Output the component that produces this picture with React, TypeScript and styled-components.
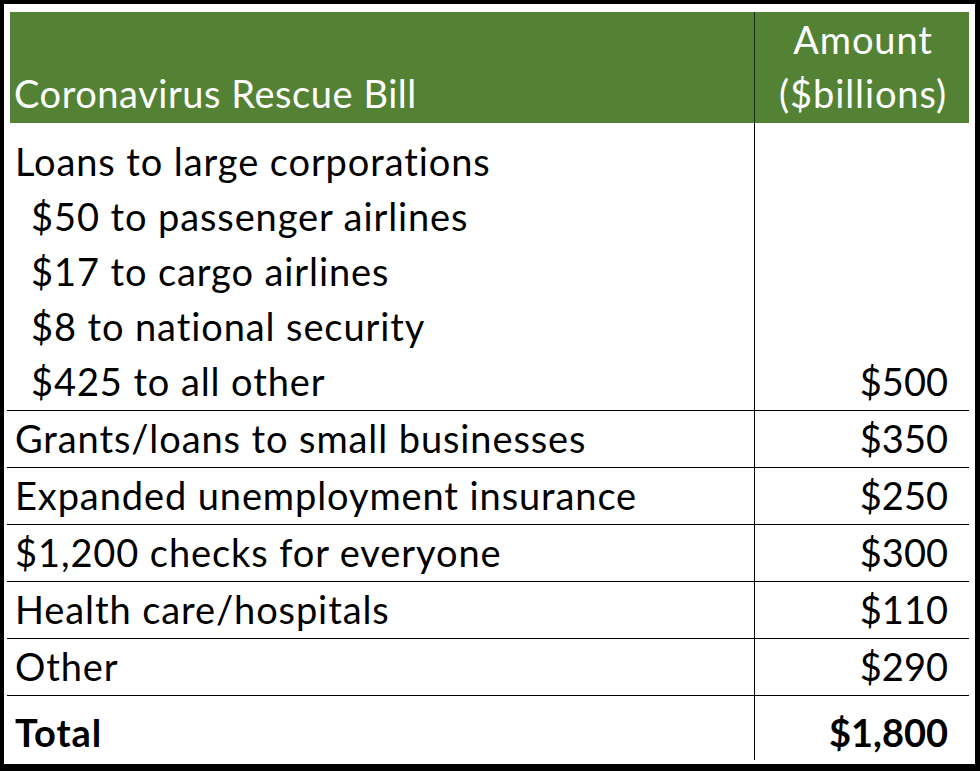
import React from "react";
import styled, { createGlobalStyle } from "styled-components";

const Global = createGlobalStyle`
  html, body { margin: 0; padding: 0; background: #ffffff; }
  body { font-family: Lato, "Open Sans", sans-serif; }
`;

const Frame = styled.div`
  box-sizing: border-box;
  width: 980px;
  height: 771px;
  border-style: solid;
  border-color: #000;
  border-width: 4px 5px 7px 4px;
  padding: 8px 6px 4px 3px;
  background: #fff;
`;

const Table = styled.div`
  display: flex;
  flex-direction: column;
  font-family: Lato, "Open Sans", sans-serif;
  font-size: 38px;
  letter-spacing: 0.9px;
  color: #000;
`;

const HeaderRow = styled.div`
  display: grid;
  grid-template-columns: 745px 1fr;
  height: 111px;
  margin-left: 3px;
  background: #548235;
  color: #fff;
`;

const HeaderCell = styled.div<{ $align?: "left" | "center"; $divider?: boolean }>`
  display: flex;
  flex-direction: column;
  justify-content: flex-end;
  align-items: ${(p) => (p.$align === "center" ? "center" : "flex-start")};
  text-align: ${(p) => p.$align ?? "left"};
  line-height: 54px;
  letter-spacing: ${(p) => (p.$align === "center" ? "0.9px" : "0.55px")};
  padding: 0 0 4px ${(p) => (p.$align === "center" ? "2px" : "4px")};
  border-right: ${(p) => (p.$divider ? "1px solid #1c2a12" : "none")};
  box-sizing: border-box;
  white-space: nowrap;
`;

const Row = styled.div<{ $height: number; $last?: boolean }>`
  display: grid;
  grid-template-columns: 748px 1fr;
  height: ${(p) => p.$height}px;
  box-sizing: border-box;
  border-bottom: ${(p) => (p.$last ? "none" : "1px solid #000")};
  font-weight: ${(p) => (p.$last ? 700 : 400)};
`;

const LabelCell = styled.div<{ $pad: number }>`
  display: flex;
  flex-direction: column;
  justify-content: flex-end;
  border-right: 1px solid #000;
  padding: 0 0 ${(p) => p.$pad}px 8px;
  line-height: 55px;
  white-space: pre;
`;

const Line = styled.div<{ $indent?: boolean }>`
  padding-left: ${(p) => (p.$indent ? "16px" : "0")};
`;

const AmountCell = styled.div<{ $pad: number }>`
  display: flex;
  flex-direction: column;
  justify-content: flex-end;
  align-items: flex-end;
  padding: 0 21px ${(p) => p.$pad}px 0;
  line-height: 55px;
  letter-spacing: 0;
  white-space: nowrap;
`;

type RowData = {
  lines: { text: string; indent?: boolean }[];
  amount: string;
  height: number;
  last?: boolean;
};

const rows: RowData[] = [
  {
    lines: [
      { text: "Loans to large corporations" },
      { text: "$50 to passenger airlines", indent: true },
      { text: "$17 to cargo airlines", indent: true },
      { text: "$8 to national security", indent: true },
      { text: "$425 to all other", indent: true },
    ],
    amount: "$500",
    height: 288,
  },
  { lines: [{ text: "Grants/loans to small businesses" }], amount: "$350", height: 57 },
  { lines: [{ text: "Expanded unemployment insurance" }], amount: "$250", height: 57 },
  { lines: [{ text: "$1,200 checks for everyone" }], amount: "$300", height: 57 },
  { lines: [{ text: "Health care/hospitals" }], amount: "$110", height: 57 },
  { lines: [{ text: "Other" }], amount: "$290", height: 57 },
  { lines: [{ text: "Total" }], amount: "$1,800", height: 64, last: true },
];

export default function App() {
  return (
    <>
      <Global />
      <Frame>
        <Table>
          <HeaderRow>
            <HeaderCell $divider>Coronavirus Rescue Bill</HeaderCell>
            <HeaderCell $align="center">
              <span>Amount</span>
              <span>($billions)</span>
            </HeaderCell>
          </HeaderRow>
          {rows.map((r, i) => (
            <Row key={i} $height={r.height} $last={r.last}>
              <LabelCell $pad={r.last ? 0 : 1}>
                {r.lines.map((l, j) => (
                  <Line key={j} $indent={l.indent}>
                    {l.text}
                  </Line>
                ))}
              </LabelCell>
              <AmountCell $pad={r.last ? 0 : 1}>{r.amount}</AmountCell>
            </Row>
          ))}
        </Table>
      </Frame>
    </>
  );
}
